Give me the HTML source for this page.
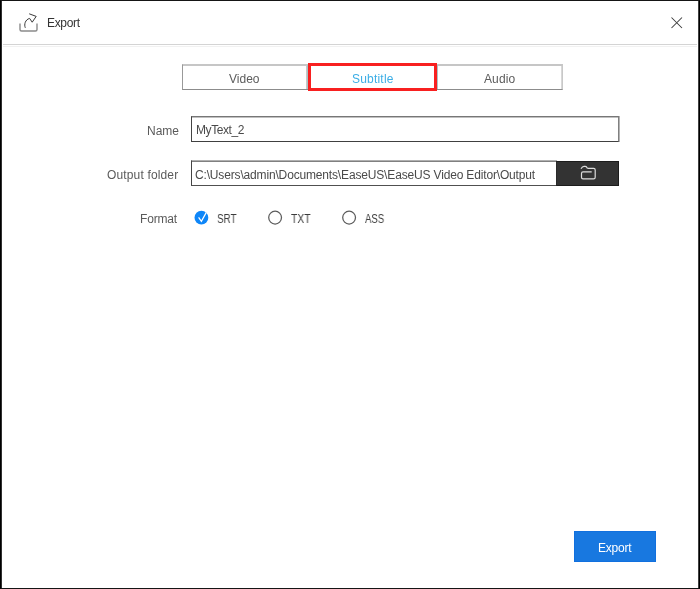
<!DOCTYPE html>
<html>
<head>
<meta charset="utf-8">
<style>
html,body{margin:0;padding:0;background:#fff;}
body{width:700px;height:589px;position:relative;overflow:hidden;font-family:"Liberation Sans",sans-serif;font-size:12px;}
.a{position:absolute;}
.t{position:absolute;white-space:pre;line-height:14px;will-change:transform;}
#frame{left:0;top:0;width:700px;height:589px;box-sizing:border-box;border-left:1px solid #000;border-right:1px solid #000;border-top:1px solid #151515;border-bottom:1px solid #151515;box-shadow:inset 1px 0 0 #303030, inset -1px 0 0 #404040;}
</style>
</head>
<body>
<div class="a" id="frame"></div>

<!-- title bar -->
<svg class="a" style="left:0;top:0" width="700" height="50" viewBox="0 0 700 50">
  <!-- tray -->
  <path d="M20,23.5 V29.5 Q20,31 21.5,31 H35.5 Q37,31 37,29.5 V23.5" fill="none" stroke="#8a8a8a" stroke-width="1.4"/>
  <!-- arrow -->
  <path d="M25.3,27.8 C23.9,24.5 25.2,19.6 29.6,18.4 L32.2,22.2 L36.2,16.4 L29.2,13.8" fill="none" stroke="#3a3a3a" stroke-width="1" stroke-linejoin="miter"/>
  <!-- close -->
  <path d="M671.5,17.5 L682,28 M682,17.5 L671.5,28" stroke="#3c3c3c" stroke-width="1.05"/>
  <!-- separator -->
  <rect x="3" y="44" width="694" height="1" fill="#d4d4d4"/>
  <rect x="3" y="46" width="694" height="1" fill="#f1f1f1"/>
</svg>
<div class="t" style="left:46.7px;top:16.3px;color:#333;letter-spacing:-0.34px;">Export</div>

<!-- tabs -->
<div class="a" style="left:182px;top:64px;width:379px;height:24px;border-top:1px solid #c6c6c6;border-left:1px solid #999;border-bottom:1px solid #8c8c8c;border-right:1px solid #c8c8c8;box-shadow:inset 0 1px 0 #c6c6c6, inset -1px 0 0 #d8d8d8;"></div>
<div class="a" style="left:306px;top:65px;width:1px;height:24px;background:#c8c8c8;"></div>
<div class="a" style="left:307px;top:65px;width:1px;height:24px;background:#a8c4c6;"></div>
<div class="a" style="left:437px;top:65px;width:1px;height:24px;background:#a8c4c6;"></div>
<div class="a" style="left:308px;top:63px;width:123px;height:22px;border:3px solid #f82020;"></div>
<div class="t" style="left:229.3px;top:71.7px;color:#5c5c5c;letter-spacing:0px;">Video</div>
<div class="t" style="left:351.5px;top:71.7px;color:#3caee6;letter-spacing:0.2px;">Subtitle</div>
<div class="t" style="left:484.3px;top:71.7px;color:#5c5c5c;letter-spacing:0.12px;">Audio</div>

<!-- name row -->
<div class="t" style="left:146.6px;top:123.5px;color:#5a5a5a;letter-spacing:0px;">Name</div>
<div class="a" style="left:191px;top:116px;width:426px;height:24px;border-top:1px solid #777;border-left:1px solid #444;border-bottom:1px solid #404040;border-right:1px solid #808080;box-shadow:inset 0 1px 0 #c0c0c0, 1px 0 0 #b4b4b4;"></div>
<div class="t" style="left:195.5px;top:122.6px;color:#4a4a4a;letter-spacing:-0.43px;">MyText_2</div>

<!-- output folder row -->
<div class="t" style="left:106.6px;top:168.1px;color:#5a5a5a;letter-spacing:0.15px;">Output folder</div>
<div class="a" style="left:191px;top:160px;width:365px;height:24px;border-top:1px solid #b0b0b0;border-left:1px solid #444;border-bottom:1px solid #505050;box-shadow:inset 0 1px 0 #808080;"></div>
<div class="t" style="left:195.3px;top:167.6px;color:#4a4a4a;letter-spacing:-0.16px;">C:\Users\admin\Documents\EaseUS\EaseUS Video Editor\Output</div>
<div class="a" style="left:556px;top:161px;width:61px;height:23px;background:#333;border:1px solid #1c1c1c;border-left-color:#2a2a2a;"></div>
<svg class="a" style="left:556px;top:161px" width="63" height="25" viewBox="556 161 63 25">
  <path d="M587.5,168.4 H593.6 Q595.2,168.4 595.2,170 V177.3 Q595.2,178.9 593.6,178.9 H583 Q581.5,178.9 581.5,177.3 V173.4 Q581.5,171.9 583,171.9 H591.7" fill="none" stroke="#ddd" stroke-width="1.2"/>
  <path d="M581,168.8 Q582.3,166.4 584,166.4 H585.3 Q586.5,166.4 587.5,168.4" fill="none" stroke="#ddd" stroke-width="1.2"/>
</svg>

<!-- format row -->
<div class="t" style="left:140.3px;top:211.7px;color:#5a5a5a;letter-spacing:-0.16px;">Format</div>
<svg class="a" style="left:180px;top:200px" width="200" height="35" viewBox="180 200 200 35">
  <circle cx="201.4" cy="217.7" r="6.9" fill="#0e86f8"/>
  <path d="M198.6,217.3 L201.4,221.4 L206.3,212.4" fill="none" stroke="#fff" stroke-width="1.2"/>
  <circle cx="275.1" cy="217.6" r="6.4" fill="none" stroke="#5c5c5c" stroke-width="1.25"/>
  <circle cx="349.1" cy="217.6" r="6.4" fill="none" stroke="#5c5c5c" stroke-width="1.25"/>
</svg>
<div class="t" style="left:216.5px;top:211.9px;color:#3c3c3c;transform:scaleX(0.82);transform-origin:0 0;">SRT</div>
<div class="t" style="left:290.5px;top:211.9px;color:#3c3c3c;transform:scaleX(0.87);transform-origin:0 0;">TXT</div>
<div class="t" style="left:364.8px;top:211.9px;color:#3c3c3c;transform:scaleX(0.80);transform-origin:0 0;">ASS</div>

<!-- export button -->
<div class="a" style="left:574px;top:531px;width:80px;height:29px;background:#1878e0;border:1px solid #1170de;"></div>
<div class="t" style="left:598px;top:540.8px;color:#fff;letter-spacing:-0.22px;">Export</div>
</body>
</html>
